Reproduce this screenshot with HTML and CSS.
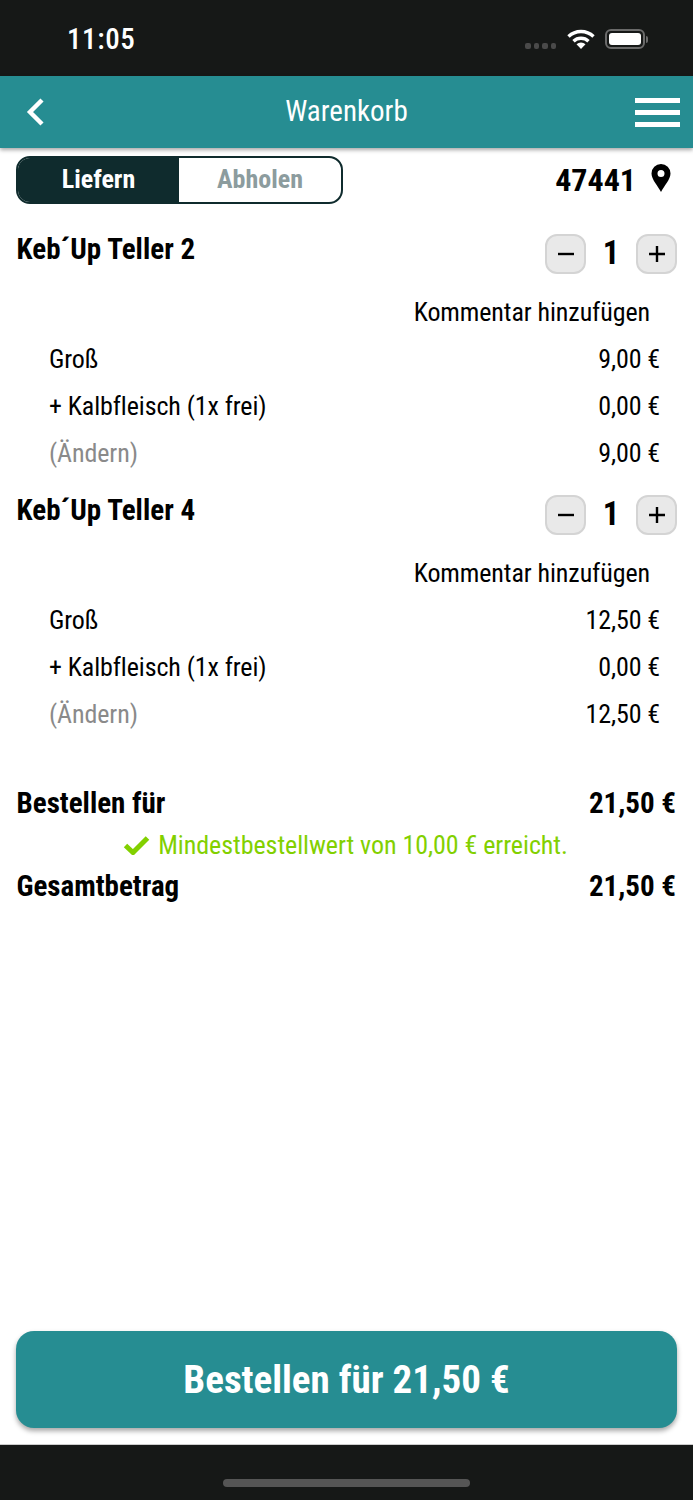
FILE: index.html
```html
<!DOCTYPE html>
<html lang="de">
<head>
  <meta charset="UTF-8" />
  <meta name="viewport" content="width=device-width, initial-scale=1.0"/>
  <title>Warenkorb</title>
  <link rel="stylesheet" href="styles.css">
</head>
<body>
  <div class="status-bar">
    <span class="clock">11:05</span>
    <div class="status-icons">
      <span class="signal"><i></i><i></i><i></i><i></i></span>
      <svg class="wifi" width="28" height="21" viewBox="0 0 28 21">
        <path d="M1.500 7.500a18 18 0 0 1 25 0" fill="none" stroke="#fff" stroke-width="3.400"/>
        <path d="M6.500 12.200a11 11 0 0 1 15 0" fill="none" stroke="#fff" stroke-width="3.400"/>
        <path d="M9.500 15.200a6.500 6.500 0 0 1 9 0L14 20z" fill="#fff"/>
      </svg>
      <span class="battery"><span class="battery-fill"></span></span>
      <span class="battery-tip"></span>
    </div>
  </div>

  <header class="top-bar">
    <svg class="back" width="22" height="30" viewBox="0 0 22 30">
      <path d="M18 3 6 15l12 12" fill="none" stroke="#fff" stroke-width="4.400"/>
    </svg>
    <h1>Warenkorb</h1>
    <div class="burger"><i></i><i></i><i></i></div>
  </header>

  <main class="content">
    <div class="delivery-row">
      <div class="segment">
        <span class="segment-on">Liefern</span>
        <span class="segment-off">Abholen</span>
      </div>
      <div class="zip">
        <span>47441</span>
        <svg width="20" height="28" viewBox="0 0 20 28">
          <path fill-rule="evenodd" d="M10 0a9.500 9.500 0 0 1 9.500 9.500C19.500 15.500 13 22 10 28 7 22 .5 15.500 .5 9.500A9.500 9.500 0 0 1 10 0zm0 6a3.500 3.500 0 1 0 0 7 3.500 3.500 0 0 0 0-7z" fill="#000"/>
        </svg>
      </div>
    </div>

    <section class="item item-first">
      <div class="item-head">
        <h2>Keb´Up Teller 2</h2>
        <div class="stepper">
          <button class="step"><svg width="18" height="18" viewBox="0 0 18 18"><path d="M1 9h16" stroke="#000" stroke-width="2.400"/></svg></button>
          <span class="qty">1</span>
          <button class="step"><svg width="18" height="18" viewBox="0 0 18 18"><path d="M1 9h16M9 1v16" stroke="#000" stroke-width="2.400"/></svg></button>
        </div>
      </div>
      <div class="comment">Kommentar hinzufügen</div>
      <div class="line"><span>Groß</span><span>9,00 €</span></div>
      <div class="line"><span>+ Kalbfleisch (1x frei)</span><span>0,00 €</span></div>
      <div class="line"><span class="muted">(Ändern)</span><span>9,00 €</span></div>
    </section>

    <section class="item">
      <div class="item-head">
        <h2>Keb´Up Teller 4</h2>
        <div class="stepper">
          <button class="step"><svg width="18" height="18" viewBox="0 0 18 18"><path d="M1 9h16" stroke="#000" stroke-width="2.400"/></svg></button>
          <span class="qty">1</span>
          <button class="step"><svg width="18" height="18" viewBox="0 0 18 18"><path d="M1 9h16M9 1v16" stroke="#000" stroke-width="2.400"/></svg></button>
        </div>
      </div>
      <div class="comment">Kommentar hinzufügen</div>
      <div class="line"><span>Groß</span><span>12,50 €</span></div>
      <div class="line"><span>+ Kalbfleisch (1x frei)</span><span>0,00 €</span></div>
      <div class="line"><span class="muted">(Ändern)</span><span>12,50 €</span></div>
    </section>

    <div class="totals">
      <div class="total-row"><span>Bestellen für</span><span>21,50 €</span></div>
      <div class="min-order">
        <svg width="27" height="20" viewBox="0 0 27 20">
          <path d="M2.500 10.500 10 17.500 24.500 3" fill="none" stroke="#82d000" stroke-width="5"/>
        </svg>
        <span>Mindestbestellwert von 10,00 € erreicht.</span>
      </div>
      <div class="total-row"><span>Gesamtbetrag</span><span>21,50 €</span></div>
    </div>

    <button class="order-btn">Bestellen für 21,50 €</button>
  </main>

  <div class="home-bar"><span class="home-indicator"></span></div>
</body>
</html>
```

FILE: styles.css
```css
* {
  box-sizing: border-box;
}

body {
  margin: 0;
  height: 1500px;
  display: flex;
  flex-direction: column;
  background: #fff;
  color: #000;
  font-family: Roboto, "Liberation Sans", sans-serif;
  font-stretch: 75%;
  overflow: hidden;
}

.status-bar {
  height: 76px;
  background: #161817;
  display: flex;
  justify-content: space-between;
  align-items: center;
  padding: 2px 45px 0 67px;
  color: #fff;
}

.clock {
  font-size: 29px;
  font-weight: 500;
  font-stretch: 85%;
  letter-spacing: 0.6px;
}

.status-icons {
  display: flex;
  align-items: center;
}

.signal {
  display: flex;
  gap: 3px;
  margin: 14px 11px 0 0;
}

.signal i {
  width: 5.500px;
  height: 6px;
  border-radius: 2px;
  background: #4a4a4a;
}

.wifi {
  margin-right: 10px;
}

.battery {
  width: 40px;
  height: 20px;
  padding: 2px;
  border: 2px solid #6a6a6a;
  border-radius: 6px;
  display: block;
}

.battery-fill {
  display: block;
  height: 100%;
  background: #fff;
  border-radius: 3px;
}

.battery-tip {
  width: 2px;
  height: 7px;
  margin-left: 1px;
  background: #6a6a6a;
  border-radius: 0 2px 2px 0;
}

.top-bar {
  height: 72px;
  background: #268d92;
  display: grid;
  grid-template-columns: 1fr auto 1fr;
  align-items: center;
  padding: 0 13px;
  box-shadow: 0 2px 4px rgba(0, 0, 0, 0.35);
  position: relative;
}

.back {
  margin-left: 11px;
}

.top-bar h1 {
  margin: 0 0 3px;
  font-size: 29px;
  font-weight: 400;
  color: #fff;
}

.burger {
  width: 45px;
  justify-self: end;
  display: flex;
  flex-direction: column;
  gap: 7px;
}

.burger i {
  height: 5px;
  background: #fff;
}

.content {
  flex: 1;
  display: flex;
  flex-direction: column;
  padding: 8px 16px 16px;
}

.delivery-row {
  display: flex;
  justify-content: space-between;
  align-items: center;
}

.segment {
  width: 327px;
  height: 48px;
  display: flex;
  border: 2px solid #0f2b2d;
  border-radius: 14px;
  overflow: hidden;
  font-size: 26px;
  font-weight: 700;
}

.segment span {
  display: flex;
  align-items: center;
  justify-content: center;
  padding-bottom: 2px;
}

.segment-on {
  width: 161px;
  background: #0f2b2d;
  color: #fff;
}

.segment-off {
  flex: 1;
  color: #8c9c9e;
}

.zip {
  display: flex;
  align-items: center;
  gap: 15px;
  padding-right: 6px;
  font-size: 32px;
  font-weight: 700;
}

.zip svg {
  margin-bottom: 4px;
}

.item-first {
  margin-top: 29px;
}

.item-head {
  display: flex;
  justify-content: space-between;
  align-items: flex-start;
  height: 40px;
}

.item-head h2 {
  margin: 0;
  padding-left: 0.500px;
  font-size: 29px;
  line-height: 32px;
  font-weight: 700;
  letter-spacing: 0.05px;
}

.stepper {
  width: 132px;
  display: flex;
  align-items: center;
  justify-content: space-between;
}

.step {
  width: 41px;
  height: 40px;
  padding: 0;
  display: flex;
  align-items: center;
  justify-content: center;
  background: #e9e9e9;
  border: 2px solid #d4d4d4;
  border-radius: 12px;
}

.qty {
  padding-bottom: 2px;
  font-size: 33px;
  font-weight: 700;
}

.comment {
  height: 43.500px;
  margin-top: 19px;
  padding-right: 27px;
  text-align: right;
  font-size: 26px;
  line-height: 40px;
  letter-spacing: -0.1px;
}

.line {
  height: 47px;
  display: flex;
  justify-content: space-between;
  align-items: center;
  padding: 0 17px 0 33px;
  font-size: 26px;
  letter-spacing: -0.1px;
}

.muted {
  color: #8a8a8a;
}

.item + .item {
  margin-top: 17.500px;
}

.totals {
  margin-top: 47px;
}

.total-row {
  display: flex;
  justify-content: space-between;
  padding: 0 1px 0 0.500px;
  font-size: 29px;
  font-weight: 700;
  line-height: 36px;
}

.min-order {
  height: 47px;
  display: flex;
  align-items: center;
  justify-content: center;
  gap: 8px;
  padding: 2px 2px 0 0;
  font-size: 26px;
  letter-spacing: -0.05px;
  color: #82d000;
}

.order-btn {
  margin-top: auto;
  height: 97px;
  background: #268d92;
  border: none;
  border-radius: 18px;
  box-shadow: 0 3px 5px rgba(0, 0, 0, 0.35);
  color: #fff;
  font-family: Roboto, sans-serif;
  font-stretch: 75%;
  font-size: 39px;
  font-weight: 700;
}

.home-bar {
  height: 56px;
  background: #161817;
  border-top: 1px solid #ccc;
  display: flex;
  justify-content: center;
  padding-top: 34px;
}

.home-indicator {
  width: 247px;
  height: 8px;
  border-radius: 4px;
  background: #555;
}
```
